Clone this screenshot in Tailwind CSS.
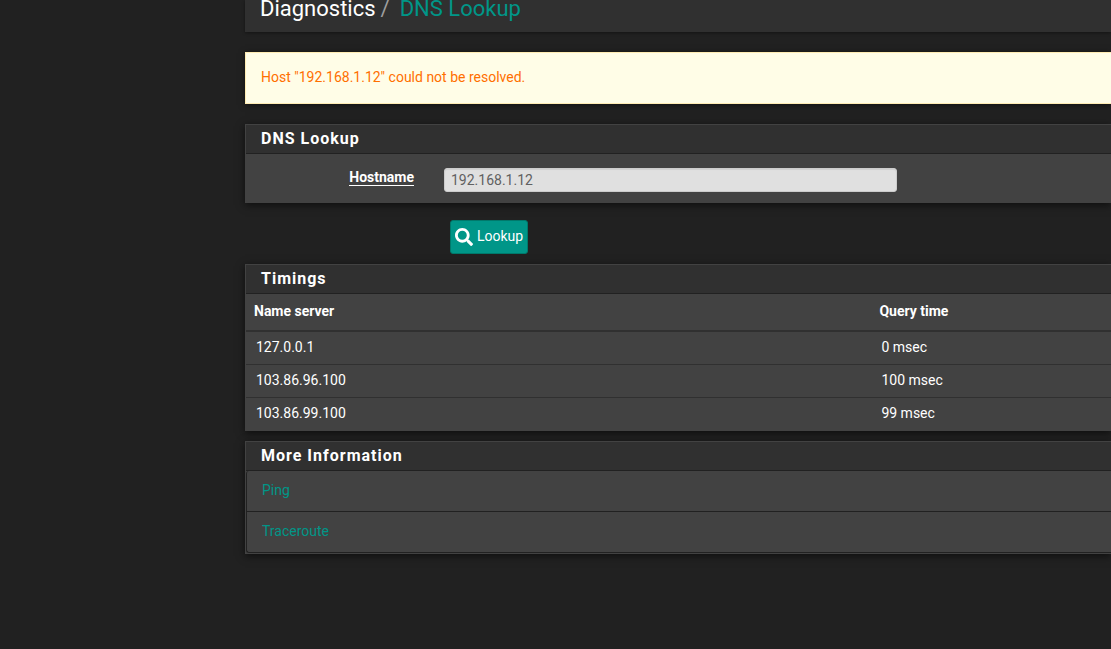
<!DOCTYPE html>
<html lang="en">
<head>
<meta charset="utf-8">
<meta name="viewport" content="width=device-width, initial-scale=1">
<title>Diagnostics: DNS Lookup</title>
<script src="https://cdn.jsdelivr.net/npm/@tailwindcss/browser@4"></script>
</head>
<body class="min-h-screen overflow-x-hidden bg-[#212121] font-[Roboto,sans-serif] text-sm leading-5 text-white">
<main class="ml-[245px]">
  <header class="flex h-8 items-end bg-[#303030] px-[15px] pb-[10px] shadow-[0_1px_3px_rgba(0,0,0,0.4)]">
    <h1 class="flex text-[22px] leading-[26px]">
      <span>Diagnostics</span>
      <span class="ml-[5px] text-[#9e9e9e]">/</span>
      <a href="#" class="ml-[10px] text-[#009688]">DNS Lookup</a>
    </h1>
  </header>

  <div role="alert" class="mt-5 border border-r-0 border-[#ffecb3] bg-[#fffde7] px-[15px] pt-[14px] pb-4 text-[#ff6f00] shadow-[0_1px_6px_rgba(0,0,0,0.5)]">Host "192.168.1.12" could not be resolved.</div>

  <form>
    <section class="mt-5 border border-r-0 border-[#424242] bg-[#424242] shadow-[0_2px_8px_rgba(0,0,0,0.6)]">
      <h2 class="border-b border-[#212121] bg-[#303030] px-[15px] py-1 text-base font-bold leading-5 tracking-[1px]">DNS Lookup</h2>
      <div class="flex gap-[30px] pt-[14px] pb-[10px]">
        <div class="w-[168px] shrink-0 text-right leading-[18px]">
          <label for="host" class="inline-block border-b border-white text-sm font-bold leading-4">Hostname</label>
        </div>
        <input id="host" type="text" value="192.168.1.12" class="h-6 w-[453px] rounded-[3px] border border-[#cccccc] bg-[#e0e0e0] px-[6px] text-sm text-[#616161] shadow-[inset_0_1px_1px_rgba(0,0,0,0.075)]">
      </div>
    </section>
    <button type="submit" class="mt-[17px] ml-[205px] flex h-[34px] items-center gap-1 rounded-[3px] border border-[#00796b] bg-[#009688] px-1">
      <svg class="size-[18px]" viewBox="0 0 512 512" fill="currentColor" aria-hidden="true"><path d="M505 442.700 405.300 343c-4.500-4.500-10.600-7-17-7H372c27.600-35.300 44-79.700 44-128C416 93.100 322.900 0 208 0S0 93.100 0 208s93.100 208 208 208c48.300 0 92.700-16.400 128-44v16.300c0 6.400 2.500 12.500 7 17l99.700 99.700c9.400 9.400 24.600 9.400 33.900 0l28.300-28.300c9.400-9.400 9.400-24.600.1-34zM208 336c-70.700 0-128-57.200-128-128 0-70.700 57.200-128 128-128 70.700 0 128 57.200 128 128 0 70.700-57.200 128-128 128z"/></svg>
      <span class="pb-0.5">Lookup</span>
    </button>
  </form>

  <section class="mt-[10px] border border-r-0 border-[#424242] bg-[#424242] shadow-[0_2px_8px_rgba(0,0,0,0.6)]">
    <h2 class="border-b border-[#212121] bg-[#303030] px-[15px] py-1 text-base font-bold leading-5 tracking-[1px]">Timings</h2>
    <table class="w-full table-fixed border-collapse text-left">
      <thead>
        <tr class="h-[37px] border-b-2 border-[#303030]">
          <th scope="col" class="w-[72.3%] px-2 pb-0.5 font-bold">Name server</th>
          <th scope="col" class="px-2 pb-0.5 font-bold">Query time</th>
        </tr>
      </thead>
      <tbody>
        <tr class="h-[33px] border-b border-[#303030]"><td class="px-[10px] pb-0.5">127.0.0.1</td><td class="px-[10px] pb-0.5">0 msec</td></tr>
        <tr class="h-[33px] border-b border-[#303030]"><td class="px-[10px] pb-0.5">103.86.96.100</td><td class="px-[10px] pb-0.5">100 msec</td></tr>
        <tr class="h-[33px]"><td class="px-[10px] pb-0.5">103.86.99.100</td><td class="px-[10px] pb-0.5">99 msec</td></tr>
      </tbody>
    </table>
  </section>

  <section class="mt-[10px] border border-r-0 border-[#424242] bg-[#424242] shadow-[0_2px_8px_rgba(0,0,0,0.6)]">
    <h2 class="border-b border-[#212121] bg-[#303030] px-[15px] py-1 text-base font-bold leading-5 tracking-[1px]">More Information</h2>
    <ul class="rounded-l-[3px] border border-t-0 border-r-0 border-[#212121] text-[#009688]">
      <li class="border-b border-[#212121] px-[15px] pt-[9px] pb-[11px]"><a href="#">Ping</a></li>
      <li class="px-[15px] pt-[9px] pb-[11px]"><a href="#">Traceroute</a></li>
    </ul>
  </section>
</main>
</body>
</html>
